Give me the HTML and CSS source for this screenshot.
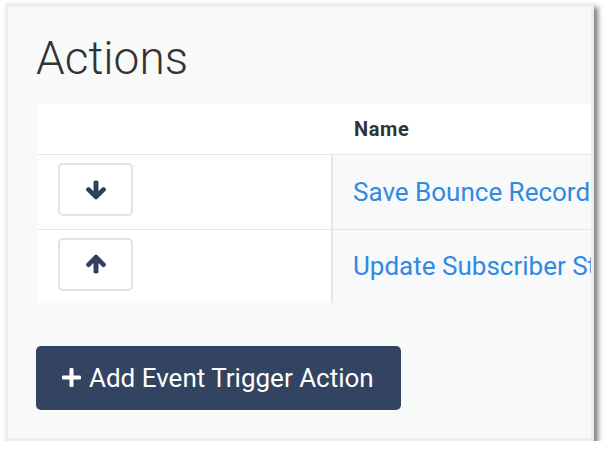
FILE: index.html
```html
<!DOCTYPE html>
<html lang="en">
<head>
  <meta charset="UTF-8" />
  <meta name="viewport" content="width=device-width, initial-scale=1.0"/>
  <title>Actions</title>
  <link rel="stylesheet" href="styles.css">
</head>
<body>

  <div class="panel">
    <h1>Actions</h1>

    <table class="actions-table">
      <thead>
        <tr>
          <th class="col-move"></th>
          <th class="col-name">Name</th>
        </tr>
      </thead>
      <tbody>
        <tr>
          <td class="col-move">
            <button class="move-btn" title="Move down">
              <svg viewBox="53 128 1558 1483" width="20" height="20"><path d="M1611 832q0 53-37 90l-651 652q-39 37-91 37-53 0-90-37l-651-652q-38-36-38-90 0-53 38-91l74-75q39-37 91-37 53 0 90 37l294 294v-704q0-52 38-90t90-38h128q52 0 90 38t38 90v704l294-294q37-37 90-37 52 0 91 37l75 75q37 39 37 91z"/></svg>
            </button>
          </td>
          <td class="col-name"><a href="#">Save Bounce Record</a></td>
        </tr>
        <tr>
          <td class="col-move">
            <button class="move-btn" title="Move up">
              <svg viewBox="53 192 1558 1472" width="20" height="20"><path d="M1611 971q0 51-37 90l-75 75q-38 38-91 38-54 0-90-38l-294-293v704q0 52-37.5 84.5t-90.5 32.5h-128q-53 0-90.5-32.5t-37.5-84.5v-704l-294 293q-36 38-90 38t-90-38l-75-75q-38-38-38-90 0-53 38-91l651-651q35-37 90-37 54 0 91 37l651 651q37 39 37 91z"/></svg>
            </button>
          </td>
          <td class="col-name"><a href="#">Update Subscriber Status</a></td>
        </tr>
      </tbody>
    </table>

    <button class="add-btn">
      <svg viewBox="0 32 448 448" width="19" height="19"><path d="M416 208H272V64c0-17.67-14.33-32-32-32h-32c-17.67 0-32 14.330-32 32v144H32c-17.67 0-32 14.33-32 32v32c0 17.67 14.33 32 32 32h144v144c0 17.67 14.33 32 32 32h32c17.67 0 32-14.33 32-32V304h144c17.67 0 32-14.33 32-32v-32c0-17.67-14.33-32-32-32z"/></svg>
      Add Event Trigger Action
    </button>
  </div>

</body>
</html>
```

FILE: styles.css
```css
* {
  box-sizing: border-box;
}

body {
  margin: 0;
  padding: 3px 0 0 5px;
  background: #fff;
  font-family: Roboto, 'Liberation Sans', sans-serif;
  color: #333;
}

.panel {
  width: 589px;
  background: #f8f9f9;
  border: 3px solid #eaf0f0;
  border-top-width: 4px;
  padding: 28px 0 28px 28px;
  overflow: hidden;
  box-shadow: 4px 4px 5px rgba(0, 0, 0, 0.5);
}

h1 {
  margin: 0 0 23px;
  font-size: 46px;
  font-weight: 300;
  line-height: 46px;
  color: #333;
}

.actions-table {
  margin-left: 2px;
  width: 600px;
  table-layout: fixed;
  border-collapse: collapse;
  background: #fff;
}

.actions-table th,
.actions-table td {
  padding: 0;
  text-align: left;
  white-space: nowrap;
  overflow: hidden;
}

.actions-table thead tr {
  height: 50px;
  border-bottom: 1px solid #e6e6e6;
}

.actions-table tbody tr {
  height: 75px;
  border-bottom: 1px solid #e6e6e6;
}

.actions-table tbody tr:last-child {
  height: 74px;
  border-bottom: none;
}

.actions-table .col-move {
  width: 294px;
  padding: 0 20px;
}

.actions-table th.col-name {
  padding-left: 22px;
  font-size: 20px;
  font-weight: bold;
  letter-spacing: 0.6px;
  color: #333;
}

.actions-table td.col-name {
  padding-left: 20px;
  background: #f8f9fa;
  border-left: 2px solid #e6e6e6;
}

.col-name a {
  font-size: 26px;
  color: #2f8ae2;
  text-decoration: none;
}

.move-btn {
  display: flex;
  align-items: center;
  justify-content: center;
  width: 75px;
  height: 53px;
  margin-top: -4px;
  background: #fff;
  border: 2px solid #e3e3e3;
  border-radius: 5px;
  cursor: pointer;
}

.move-btn svg {
  flex-shrink: 0;
  fill: #2e3f5f;
}

.add-btn {
  display: flex;
  align-items: center;
  gap: 8px;
  margin-top: 43px;
  height: 64px;
  padding: 0 27px 0 26px;
  background: #334462;
  border: none;
  border-radius: 5px;
  color: #fff;
  font-family: Roboto, 'Liberation Sans', sans-serif;
  font-size: 26px;
  line-height: 1;
  cursor: pointer;
}

.add-btn svg {
  flex-shrink: 0;
  fill: #fff;
  margin-top: -2px;
}
```
